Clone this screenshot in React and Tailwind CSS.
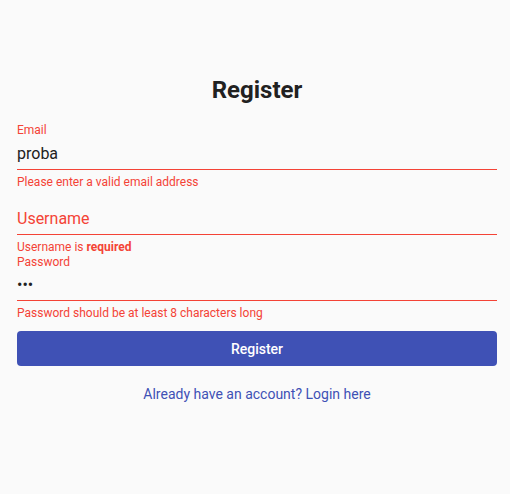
import React from "react";

const App = () => {
  return (
    <div className="min-h-[494px] bg-[#fafafa] font-['Roboto',sans-serif] text-[#212121]">
      <div className="w-[480px] ml-[17px] pt-[74px]">
        {/* Title */}
        <h1 className="text-2xl leading-8 font-bold text-center text-[#212121] mb-[17px]">
          Register
        </h1>

        {/* Email */}
        <label className="block text-xs leading-[14px] text-[#f44336]">Email</label>
        <div className="mt-[5px] h-[28px] border-b border-[#f44336] text-base leading-6">
          proba
        </div>
        <p className="mt-[5px] text-xs leading-[14px] text-[#f44336]">
          Please enter a valid email address
        </p>

        {/* Username */}
        <div className="mt-[18px] h-[28px] border-b border-[#f44336] text-base leading-6 text-[#f44336]">
          Username
        </div>
        <p className="mt-[5px] text-xs leading-[14px] text-[#f44336]">
          Username is <span className="font-bold">required</span>
        </p>

        {/* Password */}
        <label className="block mt-px text-xs leading-[14px] text-[#f44336]">Password</label>
        <input
          type="password"
          value="abc"
          readOnly
          className="mt-1 block w-full h-[28px] border-b border-[#f44336] text-base leading-6 pb-1 bg-transparent outline-none text-[#212121]"
        />
        <p className="mt-[5px] text-xs leading-[14px] text-[#f44336]">
          Password should be at least 8 characters long
        </p>

        {/* Submit */}
        <button className="mt-[11px] w-full h-[35px] rounded bg-[#3f51b5] text-white text-sm font-medium">
          Register
        </button>

        <p className="mt-[18px] text-center text-sm leading-5 text-[#3f51b5]">
          Already have an account? Login here
        </p>
      </div>
    </div>
  );
};

export default App;
